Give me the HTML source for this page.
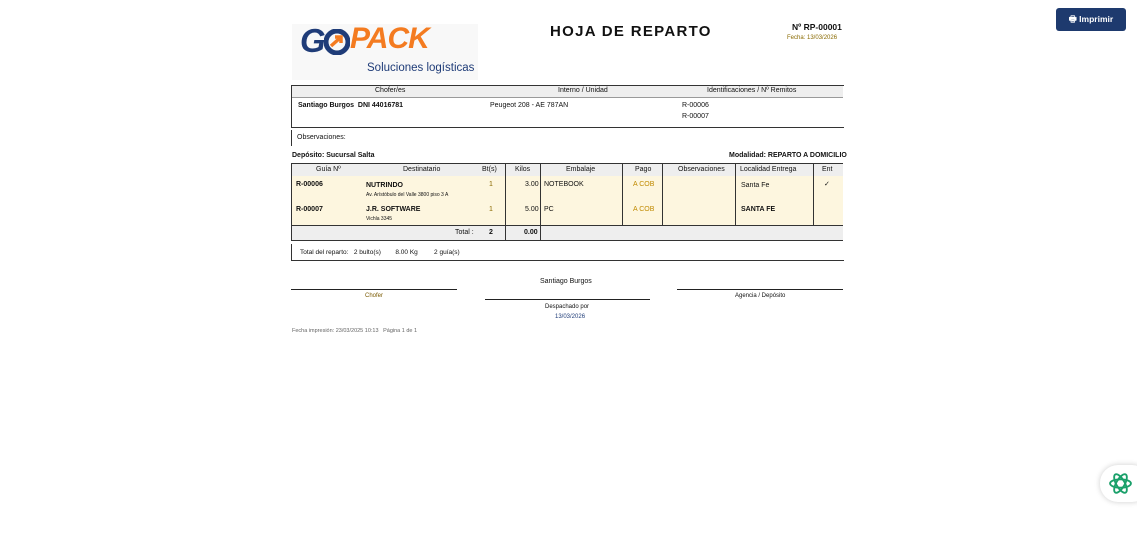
<!DOCTYPE html>
<html><head><meta charset="utf-8"><style>
body{margin:0;width:1137px;height:548px;background:#fff;font-family:"Liberation Sans",sans-serif;color:#111;position:relative;overflow:hidden}
.a{position:absolute;white-space:nowrap}
.s{font-size:7px}
.b{font-weight:bold}
</style></head><body>
<!-- logo -->
<div class="a" style="left:292px;top:24px;width:186px;height:56px;background:#f8f8f8"></div>
<div class="a b" style="left:300px;top:22px;font-size:33px;font-style:italic;letter-spacing:-1px;color:#1f3c78">G</div>
<svg class="a" style="left:324px;top:29px" width="26" height="26" viewBox="0 0 26 26"><circle cx="13" cy="13" r="11" fill="none" stroke="#1f3c78" stroke-width="5"/><path d="M7 17 L16 9 M11 8 L17 8 L17 14" stroke="#f47b20" stroke-width="3.5" fill="none"/></svg>
<div class="a b" style="left:350px;top:22px;font-size:30px;font-style:italic;letter-spacing:-1px;color:#f47b20">PACK</div>
<div class="a" style="left:367px;top:62px;font-size:11.5px;color:#1f3c78">Soluciones logísticas</div>

<div class="a b" style="left:550px;top:23px;font-size:15px;letter-spacing:1.3px">HOJA DE REPARTO</div>
<div class="a b" style="left:792px;top:22px;font-size:8.5px">Nº RP-00001</div>
<div class="a" style="left:787px;top:35px;font-size:6px;color:#8a6a00">Fecha: 13/03/2026</div>

<!-- info box -->
<div class="a" style="left:291px;top:85px;width:552px;height:41px;border:1px solid #333;border-right:none"></div>
<div class="a" style="left:292px;top:86px;width:551px;height:11px;background:#eee;border-bottom:1px solid #999"></div>
<div class="a s" style="left:375px;top:87px">Chofer/es</div>
<div class="a s" style="left:558px;top:87px">Interno / Unidad</div>
<div class="a s" style="left:707px;top:87px">Identificaciones / Nº Remitos</div>
<div class="a s b" style="left:298px;top:102px">Santiago Burgos &nbsp;DNI 44016781</div>
<div class="a s" style="left:490px;top:102px">Peugeot 208 - AE 787AN</div>
<div class="a s" style="left:682px;top:102px">R-00006</div>
<div class="a s" style="left:682px;top:113px">R-00007</div>

<div class="a" style="left:291px;top:130px;height:16px;border-left:1px solid #333"></div>
<div class="a s" style="left:297px;top:134px">Observaciones:</div>

<div class="a s b" style="left:292px;top:152px">Depósito: Sucursal Salta</div>
<div class="a s b" style="left:729px;top:152px">Modalidad: REPARTO A DOMICILIO</div>

<!-- main table -->
<div class="a" style="left:291px;top:163px;width:552px;height:12px;background:#eee;border-top:1px solid #333;border-bottom:1px solid #333"></div>
<div class="a" style="left:291px;top:176px;width:552px;height:49px;background:#fdf6df"></div>
<div class="a" style="left:291px;top:225px;width:552px;height:14px;background:#eee;border-top:1px solid #333;border-bottom:1px solid #333"></div>
<div class="a" style="left:291px;top:163px;height:77px;border-left:1px solid #333"></div>
<div class="a" style="left:505px;top:163px;height:77px;border-left:1px solid #333"></div>
<div class="a" style="left:540px;top:163px;height:77px;border-left:1px solid #333"></div>
<div class="a" style="left:622px;top:163px;height:62px;border-left:1px solid #333"></div>
<div class="a" style="left:662px;top:163px;height:62px;border-left:1px solid #333"></div>
<div class="a" style="left:735px;top:163px;height:62px;border-left:1px solid #333"></div>
<div class="a" style="left:813px;top:163px;height:62px;border-left:1px solid #333"></div>
<div class="a s" style="left:316px;top:166px">Guía Nº</div>
<div class="a s" style="left:403px;top:166px">Destinatario</div>
<div class="a s" style="left:482px;top:166px">Bt(s)</div>
<div class="a s" style="left:515px;top:166px">Kilos</div>
<div class="a s" style="left:566px;top:166px">Embalaje</div>
<div class="a s" style="left:635px;top:166px">Pago</div>
<div class="a s" style="left:678px;top:166px">Observaciones</div>
<div class="a s" style="left:740px;top:166px">Localidad Entrega</div>
<div class="a s" style="left:822px;top:166px">Ent</div>

<div class="a s b" style="left:296px;top:181px">R-00006</div>
<div class="a s b" style="left:366px;top:182px">NUTRINDO</div>
<div class="a" style="left:366px;top:192px;font-size:5px">Av. Arístóbulo del Valle 3800 piso 3 A</div>
<div class="a s" style="left:489px;top:181px;color:#8a6a00">1</div>
<div class="a s" style="left:525px;top:181px">3.00</div>
<div class="a s" style="left:544px;top:181px">NOTEBOOK</div>
<div class="a s" style="left:633px;top:181px;color:#c08a00">A COB</div>
<div class="a s" style="left:741px;top:182px">Santa Fe</div>
<div class="a s" style="left:824px;top:180px">✓</div>

<div class="a s b" style="left:296px;top:206px">R-00007</div>
<div class="a s b" style="left:366px;top:206px">J.R. SOFTWARE</div>
<div class="a" style="left:366px;top:216px;font-size:5px">Vichla 3345</div>
<div class="a s" style="left:489px;top:206px;color:#8a6a00">1</div>
<div class="a s" style="left:525px;top:206px">5.00</div>
<div class="a s" style="left:544px;top:206px">PC</div>
<div class="a s" style="left:633px;top:206px;color:#c08a00">A COB</div>
<div class="a s b" style="left:741px;top:206px">SANTA FE</div>

<div class="a s" style="left:455px;top:229px">Total :</div>
<div class="a s b" style="left:489px;top:229px">2</div>
<div class="a s b" style="left:524px;top:229px">0.00</div>

<div class="a" style="left:291px;top:244px;width:552px;height:16px;border-left:1px solid #333;border-bottom:1px solid #333"></div>
<div class="a" style="left:300px;top:249px;font-size:6.5px">Total del reparto: &nbsp; 2 bulto(s) &nbsp; &nbsp; &nbsp; &nbsp;8.00 Kg &nbsp; &nbsp; &nbsp; &nbsp; 2 guía(s)</div>

<!-- signatures -->
<div class="a s" style="left:540px;top:278px">Santiago Burgos</div>
<div class="a" style="left:291px;top:289px;width:166px;border-top:1px solid #222"></div>
<div class="a" style="left:485px;top:299px;width:165px;border-top:1px solid #222"></div>
<div class="a" style="left:677px;top:289px;width:166px;border-top:1px solid #222"></div>
<div class="a" style="left:365px;top:293px;font-size:6px;color:#7a5a00">Chofer</div>
<div class="a" style="left:735px;top:293px;font-size:6px">Agencia / Depósito</div>
<div class="a" style="left:545px;top:304px;font-size:6px">Despachado por</div>
<div class="a" style="left:555px;top:314px;font-size:6px;color:#1f3c78">13/03/2026</div>
<div class="a" style="left:292px;top:328px;font-size:5.5px;color:#666">Fecha impresión: 23/03/2025 10:13 &nbsp; Página 1 de 1</div>

<!-- button -->
<div class="a b" style="left:1056px;top:8px;width:70px;height:23px;background:#1e3a6e;border-radius:3px;color:#fff;font-size:8.5px;line-height:23px;text-align:center">🖶 Imprimir</div>

<!-- widget -->
<div class="a" style="left:1100px;top:465px;width:50px;height:37px;background:#fff;border-radius:18px;box-shadow:0 0 6px rgba(0,0,0,.2)"></div>
<svg class="a" style="left:1108px;top:471px" width="25" height="25" viewBox="0 0 24 24" fill="none" stroke="#1aa06a" stroke-width="1.8"><ellipse cx="12" cy="12" rx="10" ry="4"/><ellipse cx="12" cy="12" rx="10" ry="4" transform="rotate(60 12 12)"/><ellipse cx="12" cy="12" rx="10" ry="4" transform="rotate(120 12 12)"/></svg>
</body></html>
